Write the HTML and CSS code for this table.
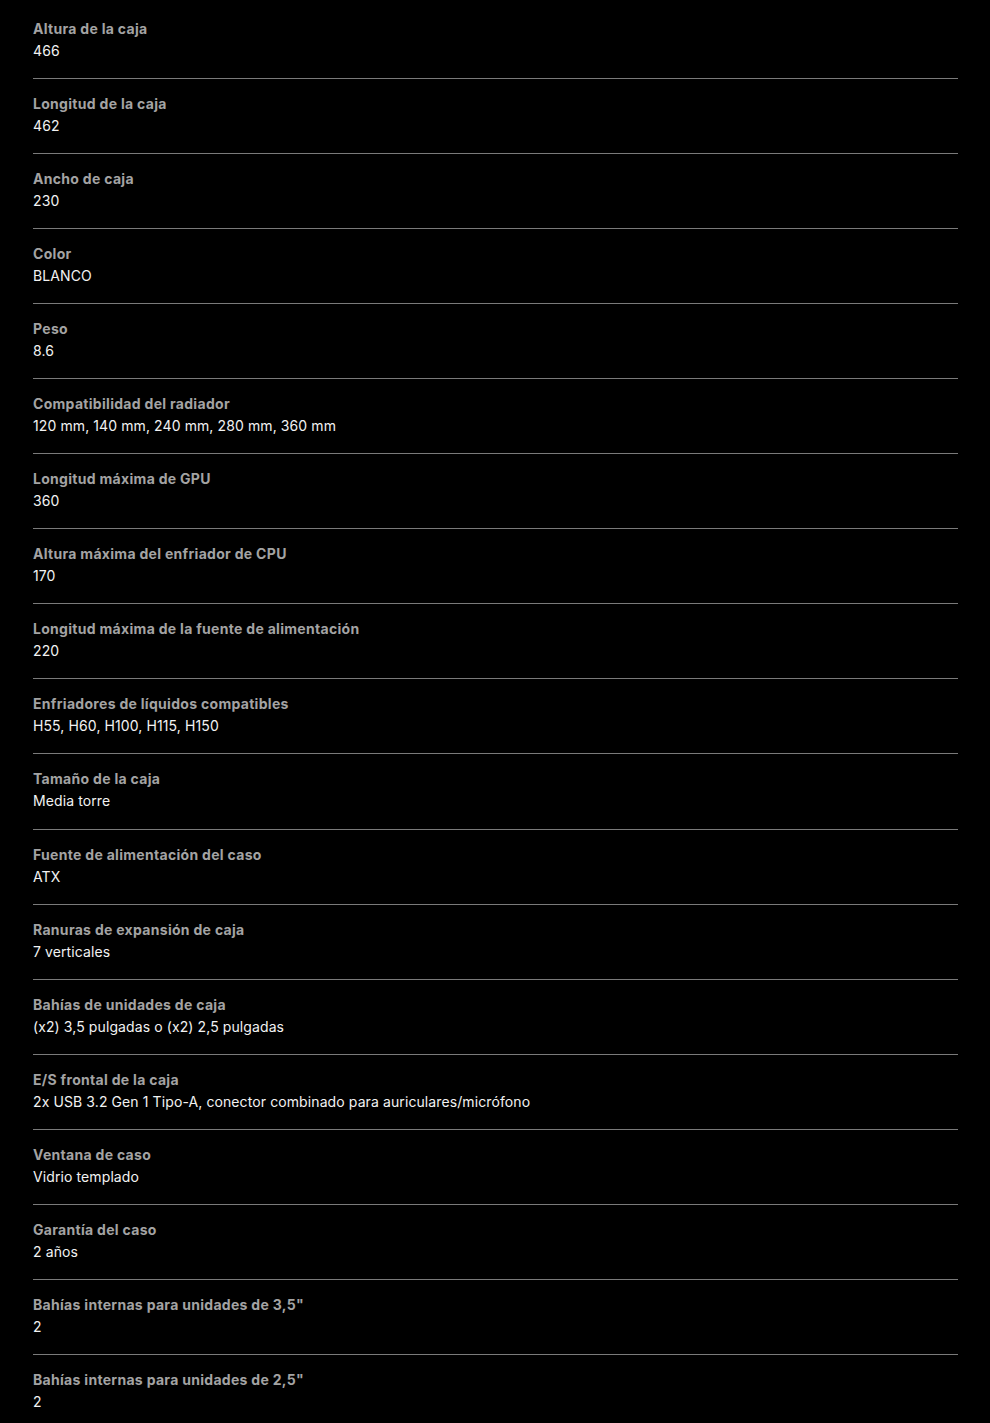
FILE: index.html
```html
<!DOCTYPE html>
<html lang="es">
<head>
<meta charset="utf-8">
<title>Especificaciones</title>
<link rel="stylesheet" href="styles.css">
</head>
<body>
<dl class="specs">
  <div class="row"><dt>Altura de la caja</dt><dd>466</dd></div>
  <div class="row"><dt>Longitud de la caja</dt><dd>462</dd></div>
  <div class="row"><dt>Ancho de caja</dt><dd>230</dd></div>
  <div class="row"><dt>Color</dt><dd>BLANCO</dd></div>
  <div class="row"><dt>Peso</dt><dd>8.6</dd></div>
  <div class="row"><dt>Compatibilidad del radiador</dt><dd>120 mm, 140 mm, 240 mm, 280 mm, 360 mm</dd></div>
  <div class="row"><dt>Longitud máxima de GPU</dt><dd>360</dd></div>
  <div class="row"><dt>Altura máxima del enfriador de CPU</dt><dd>170</dd></div>
  <div class="row"><dt>Longitud máxima de la fuente de alimentación</dt><dd>220</dd></div>
  <div class="row"><dt>Enfriadores de líquidos compatibles</dt><dd>H55, H60, H100, H115, H150</dd></div>
  <div class="row"><dt>Tamaño de la caja</dt><dd>Media torre</dd></div>
  <div class="row"><dt>Fuente de alimentación del caso</dt><dd>ATX</dd></div>
  <div class="row"><dt>Ranuras de expansión de caja</dt><dd>7 verticales</dd></div>
  <div class="row"><dt>Bahías de unidades de caja</dt><dd>(x2) 3,5 pulgadas o (x2) 2,5 pulgadas</dd></div>
  <div class="row"><dt>E/S frontal de la caja</dt><dd>2x USB 3.2 Gen 1 Tipo-A, conector combinado para auriculares/micrófono</dd></div>
  <div class="row"><dt>Ventana de caso</dt><dd>Vidrio templado</dd></div>
  <div class="row"><dt>Garantía del caso</dt><dd>2 años</dd></div>
  <div class="row"><dt>Bahías internas para unidades de 3,5"</dt><dd>2</dd></div>
  <div class="row"><dt>Bahías internas para unidades de 2,5"</dt><dd>2</dd></div>
</dl>
</body>
</html>
```
FILE: styles.css
```css
html, body {
  margin: 0;
  padding: 0;
  background: #000;
}
body {
  font-family: Inter, "Liberation Sans", sans-serif;
  font-size: 14px;
}
.specs {
  margin: 0;
  padding: 4px 32px 0 33px;
}
.row {
  display: flex;
  flex-direction: column;
  padding: 14px 0 16.06px;
  border-bottom: 1px solid #7a7a7a;
}
.row:last-child {
  border-bottom: none;
}
dt {
  color: #a3a3a3;
  font-weight: 700;
  letter-spacing: 0.3px;
  line-height: 22px;
}
dd {
  margin: 0;
  color: #f2f2f2;
  letter-spacing: 0.1px;
  line-height: 22px;
}
```
